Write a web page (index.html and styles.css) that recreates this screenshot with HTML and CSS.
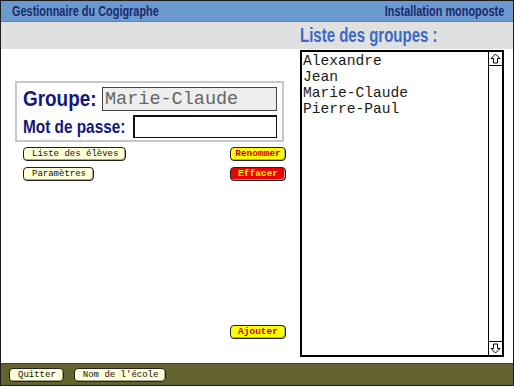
FILE: index.html
```html
<!doctype html>
<html>
    <head>
        <meta charset="utf-8" />
        <title>Gestionnaire du Cogigraphe</title>
        <link rel="stylesheet" href="styles.css">
    </head>
    <body>
        <div class="screen">
            <header class="topbar">
                <span class="narrow">Gestionnaire du Cogigraphe</span>
                <span class="narrow end">Installation monoposte</span>
            </header>
            <div class="band">
                <h2 class="narrow">Liste des groupes :</h2>
            </div>
            <main class="main">
                <section class="left">
                    <div class="groupbox">
                        <div class="row">
                            <label class="big narrow">Groupe:</label>
                            <input class="name" type="text" value="Marie-Claude" />
                        </div>
                        <div class="row">
                            <label class="small narrow">Mot de passe:</label>
                            <input class="pass" type="password" />
                        </div>
                    </div>
                    <div class="actions">
                        <button class="btn">Liste des élèves</button>
                        <button class="btn yellow">Renommer</button>
                        <button class="btn">Paramètres</button>
                        <button class="btn red">Effacer</button>
                    </div>
                    <div class="add">
                        <button class="btn yellow">Ajouter</button>
                    </div>
                </section>
                <section class="right">
                    <div class="listbox">
                        <ul class="items">
                            <li>Alexandre</li>
                            <li>Jean</li>
                            <li>Marie-Claude</li>
                            <li>Pierre-Paul</li>
                        </ul>
                        <div class="scroll">
                            <div class="arrow">
                                <svg width="11" height="11" viewBox="0 0 11 11"><path d="M5.5 1 L10 5.5 L7.5 5.5 L7.5 10 L3.5 10 L3.5 5.5 L1 5.5 Z" fill="#fff" stroke="#000" stroke-width="1"/></svg>
                            </div>
                            <div class="track"></div>
                            <div class="arrow down">
                                <svg width="11" height="11" viewBox="0 0 11 11"><path d="M5.5 10 L10 5.5 L7.5 5.5 L7.5 1 L3.5 1 L3.5 5.5 L1 5.5 Z" fill="#fff" stroke="#000" stroke-width="1"/></svg>
                            </div>
                        </div>
                    </div>
                </section>
            </main>
            <footer class="footer">
                <button class="btn">Quitter</button>
                <button class="btn">Nom de l'école</button>
            </footer>
        </div>
    </body>
</html>
```

FILE: styles.css
```css
html, body {
    margin: 0;
    padding: 0;
}

.screen {
    width: 514px;
    height: 386px;
    box-sizing: border-box;
    border: 1px solid #1c1c1c;
    display: flex;
    flex-direction: column;
    background: #fff;
    font-family: "Liberation Sans", Arial, sans-serif;
}

/* condensed look: no narrow face installed, so squeeze the bold sans */
.narrow {
    display: inline-block;
    transform: scaleX(0.78);
    transform-origin: left center;
    white-space: nowrap;
}

.narrow.end {
    transform-origin: right center;
}

.topbar {
    height: 20px;
    background: #6b9ad0;
    border-bottom: 1px solid #5a86b8;
    display: flex;
    justify-content: space-between;
    align-items: center;
    padding: 0 9px 0 11px;
    font-weight: bold;
    font-size: 14px;
    color: #1b2a6e;
}

.band {
    height: 27px;
    background: #e0e0e0;
    padding-left: 299px;
}

.band h2 {
    margin: 0;
    font-size: 20px;
    line-height: 27px;
    color: #3b69c6;
    transform: scaleX(0.75);
}

.main {
    flex: 1;
    display: flex;
}

.left {
    width: 299px;
    display: flex;
    flex-direction: column;
    padding: 32px 0 24px 14px;
    box-sizing: border-box;
}

.groupbox {
    width: 269px;
    height: 61px;
    box-sizing: border-box;
    border: 2px solid #c8c8c8;
    padding: 3px 5px 0 6px;
    display: flex;
    flex-direction: column;
    gap: 3px;
}

.row {
    display: flex;
    align-items: center;
}

.row label {
    flex: 1;
    min-width: 0;
}

.row input {
    flex: none;
}

.big {
    font-size: 22.5px;
    font-weight: bold;
    color: #14187a;
    transform: scaleX(0.84);
}

.small {
    font-size: 18.5px;
    font-weight: bold;
    color: #14187a;
    transform: scaleX(0.83);
}

.name {
    width: 175px;
    height: 24px;
    box-sizing: border-box;
    background: #eee;
    border: 1px solid #444;
    font-family: "Liberation Mono", monospace;
    font-size: 18.5px;
    color: #666;
    padding: 0 2px;
}

.pass {
    width: 144px;
    height: 23px;
    box-sizing: border-box;
    background: #fff;
    border: 1px solid #111;
    border-width: 2px 1px 1px 2px;
}

.actions {
    display: grid;
    grid-template-columns: auto auto;
    justify-content: space-between;
    justify-items: start;
    row-gap: 6px;
    width: 263px;
    margin: 5px 0 0 8px;
}

.actions .yellow,
.actions .red {
    justify-self: end;
}

.add {
    margin-top: auto;
    width: 263px;
    margin-left: 8px;
    display: flex;
    justify-content: flex-end;
}

.btn {
    height: 14px;
    box-sizing: border-box;
    padding: 0 7px 0 8px;
    font-family: "Liberation Mono", monospace;
    font-size: 9px;
    line-height: 12px;
    color: #111;
    background: #ffffd8;
    border: 1px solid #222;
    border-radius: 4px;
    box-shadow: inset -1px -1px 0 #a8a890;
}

.yellow,
.red {
    width: 56px;
    padding: 0;
    font-weight: bold;
    font-size: 9.5px;
}

.yellow {
    background: #ffff00;
    color: #c80000;
}

.red {
    background: #ee0000;
    color: #ffff00;
}

.right {
    flex: 1;
    padding: 1px 9px 6px 0;
    display: flex;
}

.listbox {
    flex: 1;
    border: 2px solid #000;
    display: flex;
}

.items {
    flex: 1;
    margin: 0;
    padding: 1px 0 0 1px;
    list-style: none;
    font-family: "Liberation Mono", monospace;
    font-size: 14.6px;
    line-height: 16px;
    color: #1a1a1a;
}

.scroll {
    width: 13px;
    border-left: 1px solid #000;
    display: flex;
    flex-direction: column;
}

.arrow {
    height: 13px;
    border-bottom: 1px solid #000;
    display: flex;
    align-items: center;
    justify-content: center;
}

.arrow.down {
    border-bottom: none;
    border-top: 1px solid #000;
}

.track {
    flex: 1;
}

.footer {
    height: 21px;
    background: #63632f;
    border-top: 1px solid #4a4a22;
    display: flex;
    align-items: center;
    gap: 10px;
    padding-left: 8px;
}
```
